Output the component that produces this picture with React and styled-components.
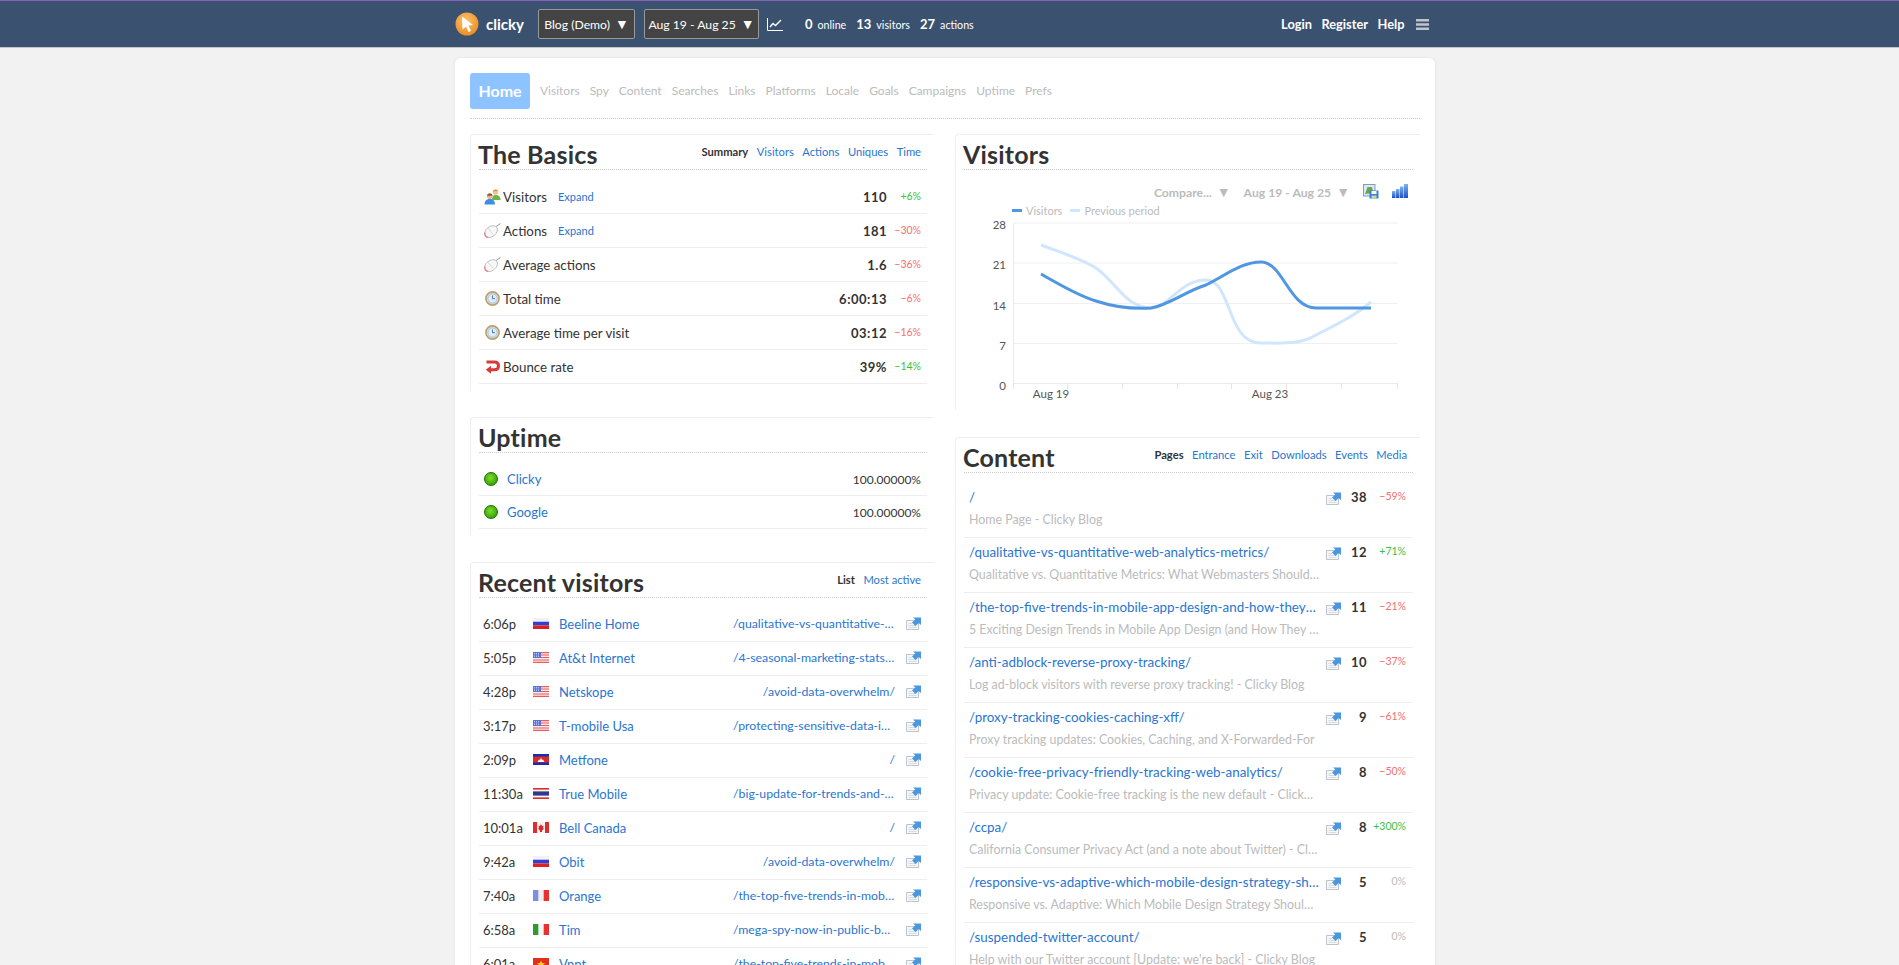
import React from 'react';
import styled, { createGlobalStyle } from 'styled-components';

const FONT = '"Lato", "Noto Sans", "Liberation Sans", sans-serif';

const GlobalStyle = createGlobalStyle`
  html, body {
    margin: 0;
    height: 965px;
    overflow: hidden;
    background: #f2f2f2;
  }
  body {
    font-family: ${FONT};
    font-size: 13px;
    color: #333;
  }
  a {
    color: #2a75d0;
    text-decoration: none;
  }
`;

const Header = styled.header`
  box-sizing: border-box;
  height: 48px;
  background: #3b5170;
  border-top: 1px solid #8a5fb5;
  border-bottom: 1px solid #c4c4c4;
`;

const Inner = styled.div`
  width: 980px;
  margin-left: 455px;
`;

const HeaderRow = styled(Inner)`
  display: flex;
  align-items: center;
  height: 46px;
  color: #fff;
`;

const Logo = styled.div`
  display: flex;
  align-items: center;
  gap: 7px;
  width: 83px;
  font-size: 15px;
  font-weight: 700;
`;

const Selector = styled.div`
  box-sizing: border-box;
  flex: none;
  width: ${(p) => p.$w}px;
  height: 30px;
  line-height: 28px;
  margin-right: ${(p) => p.$mr}px;
  text-align: center;
  background: #444;
  border: 1px solid #999;
  border-radius: 2px;
  font-size: 12.2px;
  white-space: nowrap;
`;

const Caret = styled.span`
  margin-left: 5px;
  font-size: 14px;
`;

const TrendSvg = styled.svg`
  flex: none;
  margin-left: -2px;
`;

const Stats = styled.div`
  display: flex;
  align-items: baseline;
  gap: 10px;
  margin-left: 22px;
  font-size: 10.7px;
`;

const Stat = styled.span`
  b {
    font-size: 13px;
    font-weight: 700;
    margin-right: 5px;
  }
`;

const UserNav = styled.nav`
  display: flex;
  align-items: center;
  gap: 9.5px;
  margin-left: auto;
  margin-right: 6px;
  font-size: 12.8px;
  font-weight: 700;
`;

const MenuSvg = styled.svg`
  margin-left: 2px;
`;

const Card = styled(Inner)`
  box-sizing: border-box;
  margin-top: 10px;
  height: 920px;
  padding: 15px 15px 0;
  background: #fff;
  border-radius: 6px 6px 0 0;
  box-shadow: 0 0 3px rgba(0, 0, 0, 0.08);
`;

const Tabs = styled.nav`
  display: flex;
  align-items: center;
  gap: 10px;
  padding-bottom: 9px;
  border-bottom: 1px dotted #ccc;
  font-size: 12px;
  a {
    color: #bbb;
  }
  a + a {
    margin-top: -2px;
  }
`;

const HomeTab = styled.a`
  && {
    color: #fff;
  }
  width: 60px;
  height: 36px;
  line-height: 36px;
  text-align: center;
  background: #8dc4ff;
  border-radius: 3px;
  font-size: 16px;
  font-weight: 700;
`;

const Columns = styled.div`
  display: grid;
  grid-template-columns: 464px 465px;
  column-gap: 21px;
  margin-top: 15px;
`;

const Column = styled.div`
  display: flex;
  flex-direction: column;
  gap: ${(p) => p.$gap}px;
`;

const Panel = styled.section`
  box-sizing: border-box;
  padding: 0 7px 7px 8px;
  border-top: 1px solid #eee;
  border-left: 1px solid #eee;
  border-radius: 4px 0 0 0;
`;

const PanelHead = styled.div`
  display: flex;
  justify-content: space-between;
  height: 34px;
  border-bottom: 1px dotted #ccc;
  margin-bottom: 10px;
`;

const Title = styled.h2`
  margin: 0 0 0 -1px;
  font-size: 25px;
  line-height: 38px;
  font-weight: 700;
  letter-spacing: 0.2px;
  color: #333;
  white-space: nowrap;
`;

const PanelTabs = styled.div`
  display: flex;
  gap: 8.5px;
  padding: 10px 6px 0 0;
  font-size: 11.2px;
  line-height: 14px;
  b {
    color: #333;
  }
`;

const Row = styled.div`
  display: flex;
  align-items: center;
  box-sizing: border-box;
  height: ${(p) => p.$h || 34}px;
  padding: 0 6px ${(p) => p.$pb || 0}px ${(p) => p.$pl || 5}px;
  border-bottom: 1px solid #eee;
`;

const IconSlot = styled.span`
  display: flex;
  justify-content: center;
  flex: none;
  width: 17px;
  margin-right: 2px;
`;

const RowLabel = styled.span`
  font-size: 13.3px;
  color: #333;
`;

const Expand = styled.a`
  margin-left: 11px;
  font-size: 11px;
`;

const Value = styled.b`
  margin-left: auto;
  font-weight: 700;
  letter-spacing: 0.5px;
`;

const UptimeValue = styled.span`
  margin-left: auto;
  font-size: 12px;
`;

const Delta = styled.span`
  flex: none;
  width: 34px;
  text-align: right;
  font-size: 10.5px;
  margin-top: -2px;
  color: ${(p) => p.$color};
`;

const ContentDelta = styled(Delta)`
  width: auto;
`;

const Dot = styled.span`
  flex: none;
  width: 14px;
  height: 14px;
  margin-right: 9px;
  box-sizing: border-box;
  border-radius: 50%;
  border: 1px solid #1d6d00;
  background: radial-gradient(circle at 45% 40%, #7fdd30, #2fa100 80%);
`;

const Time = styled.span`
  flex: none;
  width: 50px;
`;

const Flag = styled.svg`
  flex: none;
  width: 16px;
  height: 11px;
  margin-right: 10px;
`;

const Visitor = styled.a`
  flex: none;
  width: 174px;
  white-space: nowrap;
`;

const Url = styled.a`
  flex: none;
  width: 162px;
  text-align: right;
  font-size: 12.3px;
  margin-top: -1px;
  white-space: nowrap;
  overflow: hidden;
  text-overflow: ellipsis;
`;

const ExtSvg = styled.svg`
  flex: none;
  width: 15px;
  height: 13px;
  margin-left: ${(p) => p.$ml}px;
  margin-top: ${(p) => p.$mt}px;
`;

const ContentRow = styled.div`
  display: grid;
  grid-template-columns: 357px 15px 26px 39px;
  grid-template-rows: 22px 22px;
  align-items: center;
  box-sizing: border-box;
  height: 55px;
  padding: 3px 7px 0 5px;
  border-bottom: 1px solid #eee;
`;

const PageLink = styled.a`
  width: 350px;
  font-size: 13.4px;
  white-space: nowrap;
  overflow: hidden;
  text-overflow: ellipsis;
`;

const PageTitle = styled.div`
  grid-column: 1;
  grid-row: 2;
  width: 350px;
  font-size: 12.4px;
  color: #bbb;
  white-space: nowrap;
  overflow: hidden;
  text-overflow: ellipsis;
`;

const Count = styled.b`
  text-align: right;
  font-weight: 700;
  letter-spacing: 0.5px;
`;

const ChartControls = styled.div`
  display: flex;
  justify-content: flex-end;
  align-items: center;
  height: 22px;
  margin-right: 5px;
  font-size: 12.2px;
  font-weight: 700;
  color: #bbb;
  gap: 13px;
`;

const Legend = styled.div`
  display: flex;
  align-items: center;
  height: 16px;
  padding-left: 48px;
  font-size: 11px;
  color: #bbb;
`;

const Swatch = styled.i`
  width: 10px;
  height: 3px;
  margin-right: 4px;
  background: ${(p) => p.$color};
`;

const LegendText = styled.span`
  margin-right: 8px;
`;

const ChartSvg = styled.svg`
  display: block;
  width: 448px;
  height: 184px;
  margin-bottom: 1px;
`;

const AxisText = styled.text`
  font-family: ${FONT};
  font-size: 11.5px;
  fill: #555;
`;

const LogoIcon = () => (
  <svg width="24" height="24" viewBox="0 0 24 24">
    <defs>
      <radialGradient id="logoFill" cx="45%" cy="35%" r="70%">
        <stop offset="0" stopColor="#fcc36a" />
        <stop offset="1" stopColor="#e98a1f" />
      </radialGradient>
    </defs>
    <circle cx="12" cy="12" r="11.5" fill="url(#logoFill)" />
    <path d="M7 4.5 L18 13 L13.5 13.5 L16 19 L13.5 20 L11 14.5 L7.5 17.5 Z" fill="#fff" />
  </svg>
);

const TrendIcon = () => (
  <TrendSvg width="16" height="13" viewBox="0 0 16 13">
    <path d="M0.5 0 V12.5 H16" fill="none" stroke="#fff" strokeWidth="1" />
    <path d="M3 9 L6 5.5 L8.5 7.5 L14 2" fill="none" stroke="#fff" strokeWidth="1.4" />
  </TrendSvg>
);

const MenuIcon = () => (
  <MenuSvg width="13" height="11" viewBox="0 0 13 11">
    <path d="M0 0 H13 V2.6 H0 Z M0 4.2 H13 V6.8 H0 Z M0 8.4 H13 V11 H0 Z" fill="#bfc5cd" />
  </MenuSvg>
);

const PeopleIcon = () => (
  <svg width="17" height="16" viewBox="0 0 17 16">
    <circle cx="11.5" cy="3" r="2.7" fill="#f0c48a" />
    <path d="M8.8 3 A2.8 2.8 0 0 1 14.2 2.4 C12.5 1.8 10.5 2 8.8 3 Z" fill="#e09a3c" />
    <path d="M8 11 C8 7 10 6 11.5 6 C14.5 6 16.5 7.5 16.5 11 Z" fill="#6fb544" />
    <circle cx="5.8" cy="7.2" r="2.8" fill="#eab88f" />
    <path d="M5.8 4.2 A3 3 0 0 0 3 7 C5 6.6 7 6.6 8.6 7 A3 3 0 0 0 5.8 4.2 Z" fill="#8a5a34" />
    <path d="M0.5 15.5 C0.5 11.5 3 10 5.8 10 C8.5 10 11 11.5 11 15.5 Z" fill="#3d8ee0" />
  </svg>
);

const MouseIcon = () => (
  <svg width="17" height="15" viewBox="0 0 17 15">
    <path d="M16.5 0.5 L12 3.6" stroke="#999" strokeWidth="1" fill="none" />
    <ellipse cx="7" cy="8.6" rx="7.2" ry="5" transform="rotate(-38 7 8.6)" fill="#f7f7f7" stroke="#b5b5b5" strokeWidth="0.8" />
    <path d="M1.2 9.5 C0.4 12 1.6 14.4 4.2 14.2" fill="none" stroke="#e77" strokeWidth="1.1" />
    <path d="M3.6 4.8 L8.8 11.2" stroke="#ccc" strokeWidth="0.7" />
  </svg>
);

const ClockIcon = () => (
  <svg width="15" height="15" viewBox="0 0 15 15">
    <circle cx="7.5" cy="7.5" r="6.6" fill="#d7e6f6" stroke="#bd9f66" strokeWidth="1.6" />
    <circle cx="7.5" cy="7.5" r="4.6" fill="#dfecfa" stroke="#7ea4cc" strokeWidth="0.6" />
    <path d="M7.5 4.5 V7.7 H10" fill="none" stroke="#3b6fa5" strokeWidth="0.9" />
  </svg>
);

const BounceIcon = () => (
  <svg width="15" height="14" viewBox="0 0 15 14">
    <path d="M1.5 2 H9.5 C12.8 2 13.5 4.2 13.5 6 C13.5 8 12.4 9.8 9.5 9.8 H5" fill="none" stroke="#d83a3a" strokeWidth="3" />
    <path d="M6 5.8 L0.8 9.8 L6 13.8 Z" fill="#d83a3a" />
  </svg>
);

const ExtIcon = ({ ml = 0, mt = 0 }) => (
  <ExtSvg $ml={ml} $mt={mt} viewBox="0 0 15 13">
    <path d="M0.5 3.5 H12.5 V12.5 H0.5 Z" fill="#f6f7f9" stroke="#bcc4cd" strokeWidth="1" />
    <path d="M2.5 6.5 H6 M2.5 8.5 H10.5 M2.5 10.5 H10.5" stroke="#cdd3da" strokeWidth="0.8" />
    <path d="M7 0.5 H15 V8 L12.6 6 L9.5 9 L6 5.5 L9.3 2.5 Z" fill="#4a96df" />
  </ExtSvg>
);

const flags = {
  ru: (
    <>
      <rect width="16" height="3.7" fill="#f2f2f6" />
      <rect y="3.7" width="16" height="3.7" fill="#2f3fd6" />
      <rect y="7.4" width="16" height="3.6" fill="#e02020" />
    </>
  ),
  us: (
    <>
      <rect width="16" height="11" fill="#f7eaea" />
      <path d="M0 0.6 H16 M0 3 H16 M0 5.5 H16 M0 8 H16 M0 10.4 H16" stroke="#ea5b5b" strokeWidth="1.1" />
      <rect width="8" height="6" fill="#5a72d8" />
      <path d="M1 1.5 H7 M1 3 H7 M1 4.5 H7" stroke="#fff" strokeWidth="0.6" strokeDasharray="1 1" />
    </>
  ),
  kh: (
    <>
      <rect width="16" height="11" fill="#1a2ea8" />
      <rect y="2.5" width="16" height="6" fill="#d62b2b" />
      <path d="M4.5 8 L6 5.5 L7 6 L8 3.5 L9 6 L10 5.5 L11.5 8 Z" fill="#f2f2f2" />
    </>
  ),
  th: (
    <>
      <rect width="16" height="11" fill="#f5f5f5" />
      <rect height="1.6" width="16" fill="#e02c2c" />
      <rect y="9.4" height="1.6" width="16" fill="#e02c2c" />
      <rect y="3.4" height="4.2" width="16" fill="#2d3a8c" />
    </>
  ),
  ca: (
    <>
      <rect width="16" height="11" fill="#f4f4f4" />
      <rect width="4" height="11" fill="#e02c2c" />
      <rect x="12" width="4" height="11" fill="#e02c2c" />
      <path d="M8 2 L9 4 L10.5 3.5 L10 6.5 L11.5 6.5 L9 8.5 V10 H7 V8.5 L4.5 6.5 H6 L5.5 3.5 L7 4 Z" fill="#d82a2a" />
    </>
  ),
  fr: (
    <>
      <rect width="16" height="11" fill="#eeeeee" />
      <rect width="5.3" height="11" fill="#7c92d8" />
      <rect x="10.7" width="5.3" height="11" fill="#e83030" />
    </>
  ),
  it: (
    <>
      <rect width="16" height="11" fill="#f4f4f4" />
      <rect width="5.3" height="11" fill="#2f9a2f" />
      <rect x="10.7" width="5.3" height="11" fill="#e83030" />
    </>
  ),
  vn: (
    <>
      <rect width="16" height="11" fill="#e03020" />
      <path d="M8 2.4 L9.1 5.1 L12 5.3 L9.7 7.1 L10.5 9.8 L8 8.3 L5.5 9.8 L6.3 7.1 L4 5.3 L6.9 5.1 Z" fill="#f8d820" />
    </>
  ),
};

const GREEN = '#3cbf3c';
const RED = '#f27070';
const GREY = '#bbb';

const basics = [
  { icon: <PeopleIcon />, label: 'Visitors', expand: true, value: '110', delta: '+6%', color: GREEN },
  { icon: <MouseIcon />, label: 'Actions', expand: true, value: '181', delta: '−30%', color: RED },
  { icon: <MouseIcon />, label: 'Average actions', value: '1.6', delta: '−36%', color: RED },
  { icon: <ClockIcon />, label: 'Total time', value: '6:00:13', delta: '−6%', color: RED },
  { icon: <ClockIcon />, label: 'Average time per visit', value: '03:12', delta: '−16%', color: RED },
  { icon: <BounceIcon />, label: 'Bounce rate', value: '39%', delta: '−14%', color: GREEN },
];

const visitors = [
  ['6:06p', 'ru', 'Beeline Home', '/qualitative-vs-quantitative-web-analytics-metrics/'],
  ['5:05p', 'us', 'At&t Internet', '/4-seasonal-marketing-stats-you-should-know/'],
  ['4:28p', 'us', 'Netskope', '/avoid-data-overwhelm/'],
  ['3:17p', 'us', 'T-mobile Usa', '/protecting-sensitive-data-in-analytics/'],
  ['2:09p', 'kh', 'Metfone', '/'],
  ['11:30a', 'th', 'True Mobile', '/big-update-for-trends-and-comparisons/'],
  ['10:01a', 'ca', 'Bell Canada', '/'],
  ['9:42a', 'ru', 'Obit', '/avoid-data-overwhelm/'],
  ['7:40a', 'fr', 'Orange', '/the-top-five-trends-in-mobile-app-design/'],
  ['6:58a', 'it', 'Tim', '/mega-spy-now-in-public-beta-for-everyone/'],
  ['6:01a', 'vn', 'Vnpt', '/the-top-five-trends-in-mobile-app-design/'],
];

const pages = [
  ['/', 'Home Page - Clicky Blog', '38', '−59%', RED],
  ['/qualitative-vs-quantitative-web-analytics-metrics/', 'Qualitative vs. Quantitative Metrics: What Webmasters Should Know', '12', '+71%', GREEN],
  ['/the-top-five-trends-in-mobile-app-design-and-how-they-work/', '5 Exciting Design Trends in Mobile App Design (and How They Impact)', '11', '−21%', RED],
  ['/anti-adblock-reverse-proxy-tracking/', 'Log ad-block visitors with reverse proxy tracking! - Clicky Blog', '10', '−37%', RED],
  ['/proxy-tracking-cookies-caching-xff/', 'Proxy tracking updates: Cookies, Caching, and X-Forwarded-For', '9', '−61%', RED],
  ['/cookie-free-privacy-friendly-tracking-web-analytics/', 'Privacy update: Cookie-free tracking is the new default - Clicky Blog', '8', '−50%', RED],
  ['/ccpa/', 'California Consumer Privacy Act (and a note about Twitter) - Clicky Blog', '8', '+300%', GREEN],
  ['/responsive-vs-adaptive-which-mobile-design-strategy-should-you-use/', 'Responsive vs. Adaptive: Which Mobile Design Strategy Should You Use', '5', '0%', GREY],
  ['/suspended-twitter-account/', "Help with our Twitter account [Update: we're back] - Clicky Blog", '5', '0%', GREY],
];

const navItems = ['Visitors', 'Spy', 'Content', 'Searches', 'Links', 'Platforms', 'Locale', 'Goals', 'Campaigns', 'Uptime', 'Prefs'];

const SaveIcon = () => (
  <svg width="16" height="15" viewBox="0 0 16 15">
    <rect x="0.5" y="0.5" width="11.5" height="11.5" fill="#dfe8f2" stroke="#7f9cc4" />
    <path d="M2 10 L4.5 3 H9 L10.5 9 Z" fill="#6aa84f" />
    <path d="M6.5 6.5 H15.5 V14.5 H6.5 Z" fill="#3b7fd0" />
    <rect x="8.5" y="7" width="5" height="3" fill="#fff" />
    <rect x="8.5" y="11.5" width="5" height="3" fill="#bcdca4" />
  </svg>
);

const BarsIcon = () => (
  <svg width="16" height="14" viewBox="0 0 16 14">
    <defs>
      <linearGradient id="barFill" x1="0" x2="0" y1="0" y2="1">
        <stop offset="0" stopColor="#7fb2f2" />
        <stop offset="1" stopColor="#1c4fc4" />
      </linearGradient>
    </defs>
    <rect x="0" y="7" width="3.5" height="7" fill="url(#barFill)" />
    <rect x="4" y="5" width="3.5" height="9" fill="url(#barFill)" />
    <rect x="8" y="2.5" width="3.5" height="11.5" fill="url(#barFill)" />
    <rect x="12" y="0" width="4" height="14" fill="url(#barFill)" />
  </svg>
);

const gridY = [8, 48, 88.5, 128.5, 168.5];
const tickX = [50, 104, 159, 214, 268, 323, 378, 434];

const VisitorChart = () => (
  <ChartSvg viewBox="0 3 448 184">
    <path d="M50 8 H434 M50 48 H434 M50 88.5 H434 M50 128.5 H434" stroke="#f0f0f0" strokeWidth="1" fill="none" />
    <path d="M49.5 8 V168.5 M49.5 168.5 H434" stroke="#eaeaea" strokeWidth="1" fill="none" />
    {tickX.map((x) => (
      <path key={x} d={`M${x - 0.5} 168 V174`} stroke="#e4e4e4" />
    ))}
    {['28', '21', '14', '7', '0'].map((t, i) => (
      <AxisText key={t} x="42" y={gridY[i] + 6} textAnchor="end">{t}</AxisText>
    ))}
    <AxisText x="87" y="183" textAnchor="middle">Aug 19</AxisText>
    <AxisText x="306" y="183" textAnchor="middle">Aug 23</AxisText>
    <path
      d="M77 30 C95 37 116 43 132 53 C152 67 162 93 187 93 C205 93 215 65 242 65 C268 65 262 128 297 128 C318 128 336 130 352 120 C370 111 392 100 407 87"
      fill="none"
      stroke="#cfe6fd"
      strokeWidth="3"
    />
    <path
      d="M77 59 C95 69 112 80 132 86 C150 92 170 94 187 93 C205 90 222 76 242 70 C262 60 278 47 297 47 C319 47 325 93 352 93 H407"
      fill="none"
      stroke="#4f97e0"
      strokeWidth="3"
    />
  </ChartSvg>
);

export default function App() {
  return (
    <>
      <GlobalStyle />
      <Header>
        <HeaderRow>
          <Logo>
            <LogoIcon />
            clicky
          </Logo>
          <Selector $w={97} $mr={9}>Blog (Demo)<Caret>▼</Caret></Selector>
          <Selector $w={115} $mr={10}>Aug 19 - Aug 25<Caret>▼</Caret></Selector>
          <TrendIcon />
          <Stats>
            <Stat><b>0</b>online</Stat>
            <Stat><b>13</b>visitors</Stat>
            <Stat><b>27</b>actions</Stat>
          </Stats>
          <UserNav>
            <span>Login</span>
            <span>Register</span>
            <span>Help</span>
            <MenuIcon />
          </UserNav>
        </HeaderRow>
      </Header>
      <Card>
        <Tabs>
          <HomeTab href="#">Home</HomeTab>
          {navItems.map((n) => (
            <a href="#" key={n}>{n}</a>
          ))}
        </Tabs>
        <Columns>
          <Column $gap={26}>
            <Panel>
              <PanelHead>
                <Title>The Basics</Title>
                <PanelTabs>
                  <b>Summary</b>
                  <a href="#">Visitors</a>
                  <a href="#">Actions</a>
                  <a href="#">Uniques</a>
                  <a href="#">Time</a>
                </PanelTabs>
              </PanelHead>
              {basics.map((b) => (
                <Row key={b.label}>
                  <IconSlot>{b.icon}</IconSlot>
                  <RowLabel>{b.label}</RowLabel>
                  {b.expand && <Expand href="#">Expand</Expand>}
                  <Value>{b.value}</Value>
                  <Delta $color={b.color}>{b.delta}</Delta>
                </Row>
              ))}
            </Panel>
            <Panel>
              <PanelHead>
                <Title>Uptime</Title>
              </PanelHead>
              {['Clicky', 'Google'].map((n) => (
                <Row key={n} $h={33}>
                  <Dot />
                  <a href="#">{n}</a>
                  <UptimeValue>100.00000%</UptimeValue>
                </Row>
              ))}
            </Panel>
            <Panel>
              <PanelHead>
                <Title>Recent visitors</Title>
                <PanelTabs>
                  <b>List</b>
                  <a href="#">Most active</a>
                </PanelTabs>
              </PanelHead>
              {visitors.map(([time, flag, name, url]) => (
                <Row key={time} $pl={4} $pb={2}>
                  <Time>{time}</Time>
                  <Flag viewBox="0 0 16 11">{flags[flag]}</Flag>
                  <Visitor href="#">{name}</Visitor>
                  <Url href="#">{url}</Url>
                  <ExtIcon ml={11} />
                </Row>
              ))}
            </Panel>
          </Column>
          <Column $gap={27}>
            <Panel>
              <PanelHead>
                <Title>Visitors</Title>
              </PanelHead>
              <ChartControls>
                <span>Compare...<Caret>▼</Caret></span>
                <span>Aug 19 - Aug 25<Caret>▼</Caret></span>
                <SaveIcon />
                <BarsIcon />
              </ChartControls>
              <Legend>
                <Swatch $color="#4f97e0" />
                <LegendText>Visitors</LegendText>
                <Swatch $color="#cfe6fd" />
                <LegendText>Previous period</LegendText>
              </Legend>
              <VisitorChart />
            </Panel>
            <Panel>
              <PanelHead>
                <Title>Content</Title>
                <PanelTabs>
                  <b>Pages</b>
                  <a href="#">Entrance</a>
                  <a href="#">Exit</a>
                  <a href="#">Downloads</a>
                  <a href="#">Events</a>
                  <a href="#">Media</a>
                </PanelTabs>
              </PanelHead>
              {pages.map(([path, title, count, delta, color]) => (
                <ContentRow key={path}>
                  <PageLink href="#">{path}</PageLink>
                  <ExtIcon mt={3} />
                  <Count>{count}</Count>
                  <ContentDelta $color={color}>{delta}</ContentDelta>
                  <PageTitle>{title}</PageTitle>
                </ContentRow>
              ))}
            </Panel>
          </Column>
        </Columns>
      </Card>
    </>
  );
}
